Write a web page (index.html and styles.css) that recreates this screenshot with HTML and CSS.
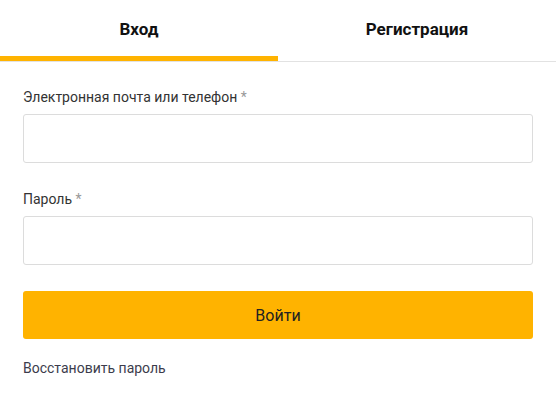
FILE: index.html
```html
<!DOCTYPE html>
<html lang="ru">
<head>
  <meta charset="UTF-8" />
  <title>Вход</title>
  <link rel="stylesheet" href="styles.css">
</head>
<body>
  <div class="tabs">
    <a href="#" class="tab active">Вход</a>
    <a href="#" class="tab">Регистрация</a>
  </div>

  <form class="login-form">
    <div class="field">
      <label>Электронная почта или телефон <span class="req">*</span></label>
      <input type="text" />
    </div>
    <div class="field">
      <label>Пароль <span class="req">*</span></label>
      <input type="password" />
    </div>
    <button type="button" class="submit-btn">Войти</button>
    <a href="#" class="restore">Восстановить пароль</a>
  </form>
</body>
</html>
```

FILE: styles.css
```css
body {
  font-family: Roboto, "Liberation Sans", Arial, sans-serif;
  margin: 0;
  padding: 0;
  background: #fff;
  color: #333;
}

.tabs {
  display: flex;
  border-bottom: 1px solid #e2e2e2;
}

.tab {
  flex: 1;
  height: 56px;
  line-height: 58px;
  text-align: center;
  font-size: 17px;
  font-weight: bold;
  color: #111;
  text-decoration: none;
  border-bottom: 5px solid transparent;
}

.tab.active {
  border-bottom-color: #ffb300;
}

.login-form {
  padding: 25px 23px 0;
}

.field {
  margin-bottom: 26px;
}

.field label {
  display: block;
  font-size: 14px;
  line-height: 20px;
  color: #333;
  margin-bottom: 7px;
}

.req {
  color: #999;
}

.field input {
  display: block;
  box-sizing: border-box;
  width: 100%;
  height: 49px;
  border: 1px solid #dcdcdc;
  border-radius: 3px;
  padding: 0 12px;
  font-size: 15px;
  font-family: inherit;
}

.submit-btn {
  display: block;
  width: 100%;
  height: 48px;
  background: #ffb300;
  color: #222;
  border: none;
  border-radius: 3px;
  font-family: inherit;
  font-size: 16px;
  cursor: pointer;
}

.restore {
  display: inline-block;
  margin-top: 19px;
  font-size: 14px;
  line-height: 20px;
  color: #3c3c4c;
  text-decoration: none;
}
```
